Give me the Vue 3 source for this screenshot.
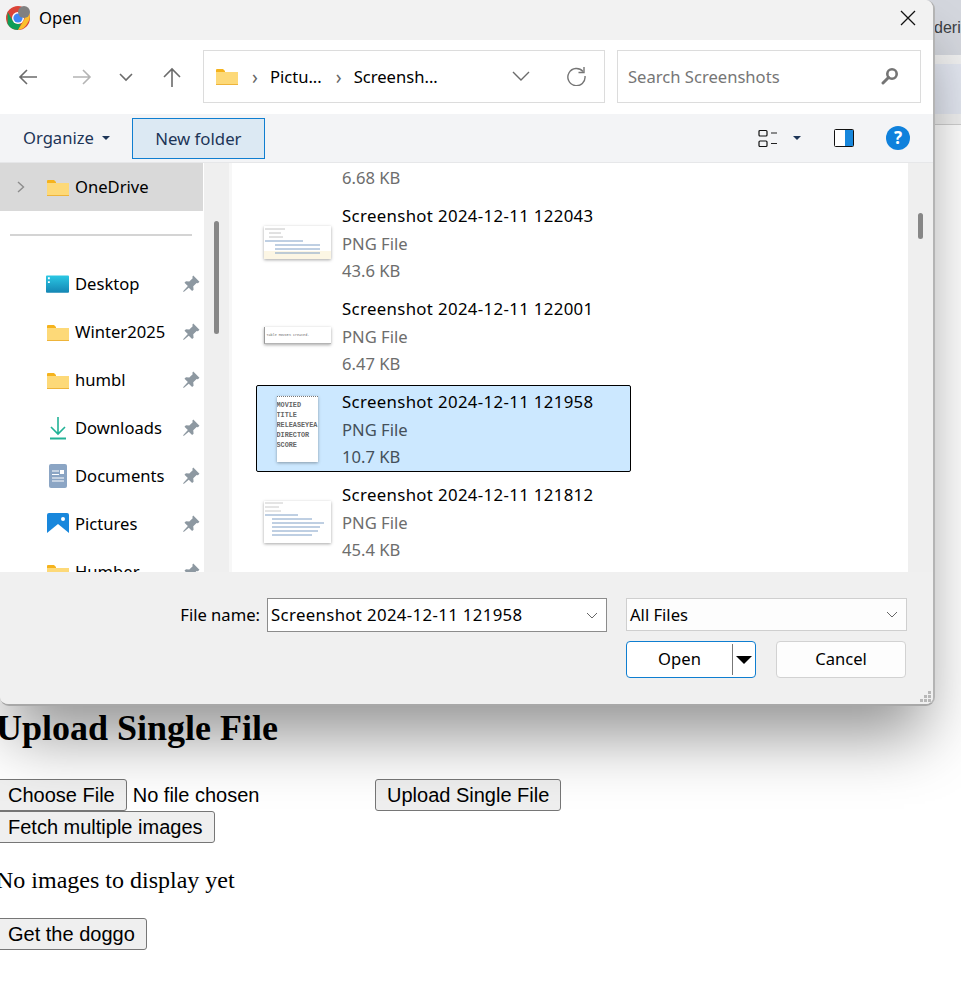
<script setup>
const places = [
  { name: 'Desktop', icon: 'desktop' },
  { name: 'Winter2025', icon: 'folder' },
  { name: 'humbl', icon: 'folder' },
  { name: 'Downloads', icon: 'downloads' },
  { name: 'Documents', icon: 'documents' },
  { name: 'Pictures', icon: 'pictures' },
  { name: 'Humber', icon: 'folder' },
]

const files = [
  { name: 'Screenshot 2024-12-11 122043', size: '43.6 KB', thumb: 'code-short' },
  { name: 'Screenshot 2024-12-11 122001', size: '6.47 KB', thumb: 'message' },
  { name: 'Screenshot 2024-12-11 121958', size: '10.7 KB', thumb: 'columns', selected: true },
  { name: 'Screenshot 2024-12-11 121812', size: '45.4 KB', thumb: 'code-long' },
]

const columns = ['MOVIED', 'TITLE', 'RELEASEYEA', 'DIRECTOR', 'SCORE']
</script>

<template>
  <div class="page">
    <div class="browser-bar">
      <div class="tab-strip"><span>deri</span></div>
      <div class="bar-gap"></div>
      <div class="bar-blue"></div>
      <div class="bar-gap last"></div>
    </div>

    <main class="content">
      <h1>Upload Single File</h1>
      <div class="upload-row">
        <input class="file-input" type="file" />
        <button type="button">Upload Single File</button>
      </div>
      <button type="button">Fetch multiple images</button>
      <p>No images to display yet</p>
      <button type="button">Get the doggo</button>
    </main>

    <section class="dialog">
      <header class="titlebar">
        <svg class="chrome" viewBox="0 0 24 24" width="24" height="24">
          <circle cx="12" cy="12" r="12" fill="#db4437" />
          <path d="M12 24a12 12 0 0 1-10.4-6L1.6 6 7 15a6 6 0 0 0 5 3l3 .2z" fill="#0f9d58" />
          <path d="M12 24l5.4-9A6 6 0 0 0 17 7l6-1a12 12 0 0 1-2 12 12 12 0 0 1-9 6z" fill="#fbc02d" />
          <circle cx="12" cy="12" r="6" fill="#fff" />
          <circle cx="12" cy="12" r="4.6" fill="#3f86f4" />
          <circle cx="18" cy="6" r="6" fill="#808080" />
        </svg>
        <span class="title-text">Open</span>
        <svg class="close" viewBox="0 0 16 16" width="16" height="16">
          <path d="M1 1l14 14M15 1L1 15" stroke="#111" stroke-width="1.3" fill="none" />
        </svg>
      </header>

      <div class="navbar">
        <div class="nav-buttons">
          <svg viewBox="0 0 20 20" width="20" height="20"><path d="M19 10H2M9 3l-7 7 7 7" stroke="#6b6b6b" stroke-width="1.6" fill="none" /></svg>
          <svg viewBox="0 0 20 20" width="20" height="20"><path d="M1 10h17M11 3l7 7-7 7" stroke="#b4b4b4" stroke-width="1.6" fill="none" /></svg>
          <svg viewBox="0 0 16 16" width="16" height="16"><path d="M2 5l6 6 6-6" stroke="#6b6b6b" stroke-width="1.6" fill="none" /></svg>
          <svg viewBox="0 0 20 20" width="20" height="20"><path d="M10 20V2M2 10l8-8 8 8" stroke="#6b6b6b" stroke-width="1.6" fill="none" /></svg>
        </div>
        <div class="address">
          <svg class="folder" viewBox="0 0 22 17" width="22" height="17">
            <path d="M0 2a1 1 0 0 1 1-1h6l2 2v3H0z" fill="#f5b31d" />
            <path d="M0 4h22v12a1 1 0 0 1-1 1H1a1 1 0 0 1-1-1z" fill="#fdd978" />
            <path d="M0 16h22v1H0z" fill="#eeb43a" />
          </svg>
          <span class="crumb-sep">›</span>
          <span class="crumb">Pictu...</span>
          <span class="crumb-sep">›</span>
          <span class="crumb">Screensh...</span>
          <svg class="address-chevron" viewBox="0 0 18 10" width="18" height="10"><path d="M1 1l8 8 8-8" stroke="#6b6b6b" stroke-width="1.4" fill="none" /></svg>
          <svg class="refresh" viewBox="0 0 20 20" width="20" height="20">
            <path d="M17 5.5A8.6 8.6 0 1 0 19 10" stroke="#757575" stroke-width="1.4" fill="none" />
            <path d="M18 1v5.500h-5.500" stroke="#757575" stroke-width="1.4" fill="none" />
          </svg>
        </div>
        <div class="search">
          <span>Search Screenshots</span>
          <svg viewBox="0 0 18 18" width="18" height="18">
            <circle cx="11" cy="7" r="4.700" stroke="#757575" stroke-width="2.600" fill="none" />
            <path d="M7.500 10.500L2 16" stroke="#757575" stroke-width="3" stroke-linecap="round" />
          </svg>
        </div>
      </div>

      <div class="toolbar">
        <span class="organize">Organize</span>
        <span class="caret small"></span>
        <button type="button" class="new-folder">New folder</button>
        <svg class="view-icon" viewBox="0 0 20 20" width="20" height="20">
          <rect x="1" y="2.500" width="8" height="5.500" rx="1" fill="none" stroke="#111" stroke-width="1.200" />
          <rect x="1" y="13" width="8" height="5.500" rx="1" fill="none" stroke="#111" stroke-width="1.200" />
          <path d="M13 5h6M13 15.500h6" stroke="#222" stroke-width="1.200" />
        </svg>
        <span class="caret view-caret"></span>
        <svg class="pane-icon" viewBox="0 0 20 20" width="20" height="20">
          <rect x="0.500" y="1.500" width="19" height="17" rx="1" fill="#fff" stroke="#111" />
          <rect x="11" y="2" width="8" height="16" fill="#1787dc" />
        </svg>
        <svg class="help-icon" viewBox="0 0 24 24" width="24" height="24">
          <circle cx="12" cy="12" r="12" fill="#0f81dc" />
          <text x="12" y="18" text-anchor="middle" class="help-mark">?</text>
        </svg>
      </div>

      <div class="browser">
        <nav class="sidebar">
          <div class="onedrive">
            <svg class="chevron" viewBox="0 0 8 12" width="8" height="12"><path d="M1 1l5.500 5-5.500 5" stroke="#8c8c8c" stroke-width="1.400" fill="none" /></svg>
            <svg viewBox="0 0 22 17" width="22" height="17">
              <path d="M0 2a1 1 0 0 1 1-1h6l2 2v3H0z" fill="#f5b31d" />
              <path d="M0 4h22v12a1 1 0 0 1-1 1H1a1 1 0 0 1-1-1z" fill="#fdd978" />
              <path d="M0 16h22v1H0z" fill="#eeb43a" />
            </svg>
            <span>OneDrive</span>
          </div>
          <div class="divider"></div>
          <div v-for="place in places" :key="place.name" class="place">
            <span class="place-icon">
              <svg v-if="place.icon === 'folder'" viewBox="0 0 22 17" width="22" height="17">
                <path d="M0 2a1 1 0 0 1 1-1h6l2 2v3H0z" fill="#f5b31d" />
                <path d="M0 4h22v12a1 1 0 0 1-1 1H1a1 1 0 0 1-1-1z" fill="#fdd978" />
                <path d="M0 16h22v1H0z" fill="#eeb43a" />
              </svg>
              <svg v-else-if="place.icon === 'desktop'" viewBox="0 0 24 18" width="24" height="18">
                <defs>
                  <linearGradient id="desk" x1="0" y1="0" x2="0" y2="1">
                    <stop offset="0" stop-color="#2bc8e4" />
                    <stop offset="1" stop-color="#1486b4" />
                  </linearGradient>
                </defs>
                <rect width="24" height="18" rx="1" fill="url(#desk)" />
                <path d="M2 2h2v2H2zM2 6h2v2H2z" fill="#fff" />
              </svg>
              <svg v-else-if="place.icon === 'downloads'" viewBox="0 0 18 24" width="18" height="24">
                <path d="M9 1v16M2 11l7 7 7-7" stroke="#22b296" stroke-width="1.600" fill="none" />
                <path d="M1 22.500h16" stroke="#22b296" stroke-width="2" />
              </svg>
              <svg v-else-if="place.icon === 'documents'" viewBox="0 0 18 24" width="18" height="24">
                <rect width="18" height="24" rx="2" fill="#8ba5c4" />
                <path d="M3 7h7M3 10.500h7M3 14h12M3 17h12" stroke="#fff" stroke-width="1.100" />
                <rect x="11" y="6" width="4" height="4" fill="#fff" />
              </svg>
              <svg v-else viewBox="0 0 22 22" width="22" height="22">
                <rect width="22" height="22" rx="2" fill="#1887dc" />
                <circle cx="16" cy="6" r="2" fill="#fff" />
                <path d="M0 20L11 11l11 9v2H0z" fill="#fff" />
              </svg>
            </span>
            <span class="place-name">{{ place.name }}</span>
            <svg class="pin" viewBox="0 0 16 16" width="18" height="18">
              <path d="M10 .5L15.500 6l-1.300 1.300-1.200-.3-3 3 .3 3-1.300 1.300-3-3L1.500 15 1 14.500l4.200-4.700-3-3L3.500 5.500l3 .3 3-3-.3-1.200z" fill="#8d98a1" />
            </svg>
          </div>
        </nav>
        <div class="scroll-track left"><span class="thumb"></span></div>

        <div class="file-list">
          <div class="file-cut">6.68 KB</div>
          <div v-for="file in files" :key="file.name" class="file" :class="{ selected: file.selected }">
            <div class="thumb-box">
              <div v-if="file.thumb === 'columns'" class="preview columns">
                <span v-for="col in columns" :key="col">{{ col }}</span>
              </div>
              <div v-else-if="file.thumb === 'message'" class="preview message">Table MOVIES created.</div>
              <svg v-else-if="file.thumb === 'code-short'" class="preview" viewBox="0 0 67 33" width="67" height="33">
                <path d="M1 3h20M5 7h12M5 11h14" stroke="#c4c4c4" />
                <path d="M1 15h38M11 19h45M11 23h45" stroke="#7f9fc6" />
                <rect x="0" y="25" width="67" height="8" fill="#fcf6e4" />
                <path d="M11 27h45" stroke="#7f9fc6" />
              </svg>
              <svg v-else class="preview" viewBox="0 0 67 42" width="67" height="42">
                <path d="M1 2h18M1 6h14M1 10h16" stroke="#cacaca" />
                <path d="M1 14h33M8 18h40M8 22h52M8 26h48M8 30h46M8 34h40" stroke="#7f9fc6" />
              </svg>
            </div>
            <div class="file-text">
              <span class="file-name">{{ file.name }}</span>
              <span>PNG File</span>
              <span>{{ file.size }}</span>
            </div>
          </div>
        </div>
        <div class="scroll-track right"><span class="thumb"></span></div>
      </div>

      <footer class="dialog-footer">
        <div class="name-row">
          <label>File name:</label>
          <div class="combo active">
            <span class="file-name">Screenshot 2024-12-11 121958</span>
            <svg viewBox="0 0 12 7" width="12" height="7"><path d="M1 1l5 5 5-5" stroke="#666" fill="none" /></svg>
          </div>
          <div class="combo types">
            <span class="types-label">All Files</span>
            <svg viewBox="0 0 12 7" width="12" height="7"><path d="M1 1l5 5 5-5" stroke="#666" fill="none" /></svg>
          </div>
        </div>
        <div class="action-row">
          <div class="action open">
            <span class="open-label">Open</span>
            <span class="open-split"></span>
            <span class="caret open-caret"></span>
          </div>
          <div class="action">Cancel</div>
        </div>
        <svg class="grip" viewBox="0 0 12 12" width="12" height="12">
          <path d="M8 0h3v3H8zM4 4h3v3H4zM8 4h3v3H8zM0 8h3v3H0zM4 8h3v3H4zM8 8h3v3H8z" fill="#b8b8b8" />
        </svg>
      </footer>
    </section>
  </div>
</template>

<style>
html,
body {
  background: #fff;
  overflow: hidden;
}
</style>

<style scoped>
.page {
  position: relative;
  height: 1001px;
  overflow: hidden;
  color: #000;
  font-family: "Liberation Serif", serif;
}

.tab-strip {
  height: 55px;
  background: #d4d7de;
  padding-left: 934px;
  overflow: hidden;
  color: #3c4043;
  font: 16px/56px "Liberation Sans", sans-serif;
  white-space: nowrap;
}

.bar-gap {
  height: 9px;
  background: #f1f1f1;
}

.bar-gap.last {
  height: 10px;
  border-bottom: 1px solid #d0d0d0;
}

.bar-blue {
  height: 50px;
  background: #e3e7f1;
}

.content {
  padding: 583px 0 0;
}

h1 {
  margin: 0 0 30px -4px;
  font-size: 36px;
  line-height: 41px;
  font-weight: 700;
}

.upload-row {
  display: flex;
  align-items: flex-start;
  margin-left: -4px;
}

.content > button {
  display: block;
  margin-left: -4px;
}

button {
  height: 32px;
  padding: 0 11px;
  border: 1px solid #767676;
  border-radius: 3px;
  background: #efefef;
  color: #000;
  font: 20px "Liberation Sans", Arial, sans-serif;
}

.file-input {
  width: 379px;
  height: 32px;
  margin: 0;
  padding: 0;
  font: 20px "Liberation Sans", Arial, sans-serif;
}

.file-input::file-selector-button {
  height: 32px;
  margin-right: 6px;
  padding: 0 11px;
  border: 1px solid #767676;
  border-radius: 3px;
  background: #efefef;
  font: 20px "Liberation Sans", Arial, sans-serif;
}

p {
  margin: 24px 0 24px -4px;
  font-size: 24px;
  line-height: 27px;
}

.dialog {
  position: absolute;
  top: 0;
  left: 0;
  display: flex;
  flex-direction: column;
  width: 935px;
  height: 706px;
  border-right: 2px solid #b4b4b4;
  border-bottom: 2px solid #a8a8a8;
  border-radius: 0 9px 9px 9px;
  box-sizing: border-box;
  overflow: hidden;
  background: #f0f0f0;
  box-shadow: 0 40px 60px -10px rgba(0, 0, 0, 0.42);
  color: #000;
  font: 16.6px/1 "Noto Sans", sans-serif;
}

.titlebar {
  flex: 0 0 40px;
  display: flex;
  align-items: center;
  padding-left: 6px;
  background: #f2f2f2;
}

.title-text {
  margin-top: -4px;
}

.chrome {
  margin: -5px 9px 0 0;
}

.close {
  margin: -4px 17px 0 auto;
}

.navbar {
  flex: 0 0 74px;
  display: flex;
  align-items: center;
  gap: 12px;
  padding-bottom: 2px;
  background: #fff;
  box-sizing: border-box;
}

.nav-buttons {
  width: 191px;
  display: grid;
  grid-template-columns: 54px 46px 44px 20px;
  align-items: center;
  margin-top: 2px;
  padding-left: 18px;
  box-sizing: border-box;
}

.address {
  width: 402px;
  height: 53px;
  display: flex;
  align-items: center;
  padding-left: 12px;
  border: 1px solid #dcdcdc;
  box-sizing: border-box;
}

.crumb {
  margin-top: 2px;
}

.crumb-sep {
  margin: 2px 12px 0 14px;
  color: #666;
  font-size: 19px;
  line-height: 14px;
}

.address-chevron {
  margin-left: auto;
}

.refresh {
  margin: 0 18px 0 36px;
}

.search {
  width: 304px;
  height: 53px;
  display: flex;
  align-items: center;
  justify-content: space-between;
  padding: 0 21px 0 10px;
  border: 1px solid #dcdcdc;
  box-sizing: border-box;
  color: #767676;
}

.search span {
  margin-top: 3px;
}

.toolbar {
  flex: 0 0 49px;
  display: flex;
  align-items: center;
  padding-left: 23px;
  border-bottom: 1px solid #e6e7e9;
  background: #f3f4f6;
  box-sizing: border-box;
  color: #1d3557;
}

.caret {
  width: 0;
  height: 0;
  border-style: solid;
  border-width: 4px 4px 0;
  border-color: #1d3557 transparent transparent;
}

.caret.small {
  margin: 0 22px 0 8px;
}

.new-folder {
  width: 133px;
  height: 41px;
  padding: 0;
  border: 1px solid #0f7ed0;
  border-radius: 0;
  background: #dce9f3;
  color: #1d3557;
  font: 16.8px "Noto Sans", sans-serif;
}

.view-icon {
  margin-left: auto;
}

.view-caret {
  margin: 0 33px 0 15px;
}

.pane-icon {
  margin-right: 32px;
}

.help-icon {
  margin-right: 23px;
}

.help-mark {
  fill: #fff;
  font: 700 17px "Noto Sans", sans-serif;
}

.browser {
  flex: 0 0 409px;
  display: flex;
  min-height: 0;
  overflow: hidden;
  background: #fff;
}

.sidebar {
  flex: 0 0 204px;
  height: 409px;
  overflow: hidden;
}

.onedrive {
  width: 203px;
  height: 48px;
  display: flex;
  align-items: center;
  padding-left: 17px;
  background: #d9d9d9;
  box-sizing: border-box;
}

.onedrive svg:nth-child(2) {
  margin: 0 6px 0 22px;
}

.divider {
  height: 2px;
  margin: 23px 12px 24px 10px;
  background: #d4d4d4;
}

.place {
  height: 48px;
  display: flex;
  align-items: center;
  padding-left: 46px;
}

.place-icon {
  width: 29px;
  display: flex;
  justify-content: center;
  padding-right: 6px;
  box-sizing: border-box;
}

.place-name {
  flex: 1;
}

.pin {
  margin-right: 4px;
}

.scroll-track {
  flex: 0 0 25px;
  position: relative;
  background: #efefef;
}

.scroll-track.left {
  flex-basis: 28px;
  border-right: 3px solid #f7f7f7;
  box-sizing: border-box;
}

.thumb {
  position: absolute;
  left: 10px;
  width: 5px;
  border-radius: 3px;
  background: #878787;
}

.left .thumb {
  top: 58px;
  height: 113px;
}

.right .thumb {
  top: 50px;
  height: 26px;
}

.file-list {
  flex: 1;
  display: flex;
  flex-direction: column;
  gap: 6px;
  padding-left: 24px;
  color: #6d6d6d;
}

.file-cut {
  height: 30px;
  padding: 1px 0 0 86px;
  line-height: 27px;
  box-sizing: border-box;
}

.file {
  width: 375px;
  height: 87px;
  flex: none;
  display: flex;
  border: 1px solid transparent;
  border-radius: 2px;
  box-sizing: border-box;
}

.file.selected {
  border-color: #000;
  background: #cce8ff;
  color: #44505a;
}

.thumb-box {
  width: 85px;
  display: flex;
  align-items: center;
  justify-content: center;
  padding-right: 5px;
  box-sizing: border-box;
}

.preview {
  background: #fff;
  box-shadow: 0 1px 3px rgba(0, 0, 0, 0.35);
}

.message {
  width: 67px;
  height: 17px;
  padding-left: 2px;
  border-left: 1px solid #9a9a9a;
  border-bottom: 1px solid #b4b4b4;
  box-sizing: border-box;
  color: #666;
  font: 3.4px/16px "Liberation Mono", monospace;
  white-space: nowrap;
}

.columns {
  width: 41px;
  height: 66px;
  display: flex;
  flex-direction: column;
  gap: 1px;
  padding: 4px 0 0;
  border-top: 1px dotted #777;
  overflow: hidden;
  box-sizing: border-box;
  color: #666;
  font: 700 6.8px/9px "Liberation Mono", monospace;
}

.file-text {
  display: flex;
  flex-direction: column;
  padding-top: 2px;
  line-height: 27.5px;
}

.file-name {
  color: #000;
  font-size: 16.8px;
  letter-spacing: 0.35px;
}

.dialog-footer {
  flex: 1;
  position: relative;
  padding: 26px 26px 0 0;
  background: #f0f0f0;
}

.name-row {
  display: flex;
  align-items: flex-start;
  justify-content: flex-end;
}

label {
  margin: 9px 7px 0 0;
}

.combo {
  width: 340px;
  height: 34px;
  display: flex;
  align-items: center;
  justify-content: space-between;
  padding: 0 8px 0 3px;
  border: 1px solid #8c8c8c;
  background: #fff;
  box-sizing: border-box;
}

.combo.types {
  width: 281px;
  height: 33px;
  margin-left: 19px;
  border-color: #cfcfcf;
  background: #fdfdfd;
}

.types-label {
  margin-top: 2px;
}

.action-row {
  display: flex;
  justify-content: flex-end;
  gap: 20px;
  margin-top: 9px;
  padding-right: 1px;
}

.action {
  width: 130px;
  height: 37px;
  display: flex;
  align-items: center;
  justify-content: center;
  border: 1px solid #d2d2d2;
  border-radius: 4px;
  background: #fdfdfd;
  box-sizing: border-box;
}

.action.open {
  justify-content: flex-start;
  border-color: #0f7ed0;
  background: #fff;
}

.open-label {
  width: 105px;
  text-align: center;
}

.open-split {
  width: 1px;
  height: 31px;
  background: #777;
}

.open-caret {
  margin-left: 3px;
  border-width: 8px 8px 0;
  border-top-color: #000;
}

.grip {
  position: absolute;
  right: 1px;
  bottom: 1px;
}
</style>
